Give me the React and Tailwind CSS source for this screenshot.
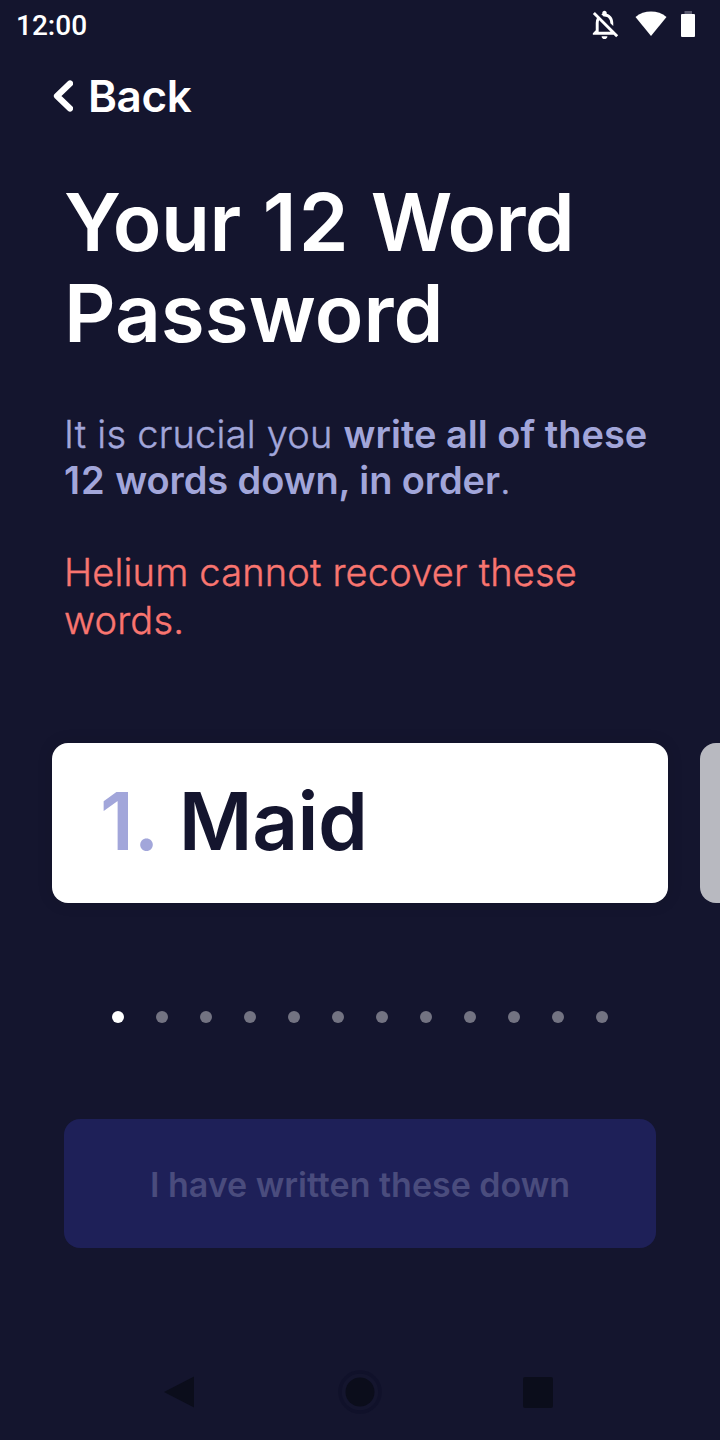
import { MdOutlineNotificationsOff } from "react-icons/md";

const DOTS = Array.from({ length: 12 }, (_, i) => i);

function StatusBar() {
  return (
    <div className="flex h-[50px] items-center pl-4 pr-[25px]">
      <span className="pt-px font-['Roboto',sans-serif] text-[28px] leading-[50px] font-medium text-white">12:00</span>
      <div className="ml-auto flex items-center pb-[2px]">
        <MdOutlineNotificationsOff className="size-[35px] text-white" />
        <svg className="ml-[13px] h-[26px] w-[32px]" viewBox="0 0 32 26">
          <path d="M0.5 6 C9 -1.2 23 -1.2 31.5 6 L16 25 Z" fill="#fff" />
        </svg>
        <svg className="ml-[14px] h-[27px] w-[14px]" viewBox="0 0 14 27">
          <rect x="3.5" y="0" width="7.5" height="4" fill="#5b5b70" />
          <rect x="0" y="3" width="14" height="23" rx="1" fill="#fff" />
        </svg>
      </div>
    </div>
  );
}

function NavBar() {
  return (
    <div className="mt-auto flex h-[96px] items-center justify-between pl-[161px] pr-[167px]">
      <svg className="h-9 w-9" viewBox="0 0 36 36">
        <path d="M3 18 L33 2.5 V33.5 Z" fill="#0b0d1b" />
      </svg>
      <svg className="-ml-[1px] h-11 w-11" viewBox="0 0 44 44">
        <circle cx="22" cy="22" r="20" fill="none" stroke="#10112a" strokeWidth="3.5" />
        <circle cx="22" cy="22" r="14.5" fill="#0b0d1b" />
      </svg>
      <svg className="h-[31px] w-[30px]" viewBox="0 0 30 31">
        <rect width="30" height="31" rx="2" fill="#0b0d1b" />
      </svg>
    </div>
  );
}

export default function App() {
  return (
    <div className="flex h-[1440px] w-[720px] flex-col overflow-hidden bg-[#14152e] font-['Inter',sans-serif]">
      <StatusBar />
      <button className="mt-[18px] flex h-14 items-center self-start pl-[53px] text-[44px] leading-[56px] font-semibold tracking-[-0.4px] text-white">
        <svg className="mr-[15px] h-8 w-5" viewBox="0 0 20 32" fill="none" stroke="#fff" strokeWidth="6.2" strokeLinecap="round" strokeLinejoin="round">
          <path d="M17 3.5 L4 16 L17 28.5" />
        </svg>
        Back
      </button>

      <h1 className="mt-[52px] ml-16 h-[182px] text-[80px] leading-[91px] font-semibold whitespace-nowrap text-white">
        <span className="mr-[2px] tracking-[-0.5px]">Your</span> <span className="tracking-[2px]">12</span>{" "}
        <span className="tracking-[-0.7px]">Word</span>
        <br />
        Password
      </h1>

      <p className="mt-[53px] ml-16 h-[92px] text-[38px] leading-[46px] font-light whitespace-nowrap text-[#a2a6da]">
        <span className="tracking-[0.22px] [-webkit-text-stroke:0.4px_#a2a6da]">It is crucial you </span>
        <span className="font-semibold">write all of these</span>
        <br />
        <span className="font-semibold">
          <span className="tracking-[1px]">12</span> <span className="tracking-[-0.1px]">words down, in order</span>
        </span>
        <span className="[-webkit-text-stroke:0.4px_#a2a6da]">.</span>
      </p>
      <p className="mt-[45px] ml-16 h-[96px] text-[38px] leading-[48px] font-light tracking-[0.18px] whitespace-nowrap text-[#f97570] [-webkit-text-stroke:0.4px_#f97570]">
        Helium cannot recover these
        <br />
        words.
      </p>

      <div className="mt-[99px] ml-[52px] flex h-[160px] gap-8">
        <div className="flex w-[616px] shrink-0 items-center rounded-[16px] bg-white pb-1 pl-12 text-[80px] leading-[96px] font-semibold whitespace-pre text-[#14152e] shadow-[0_0_16px_rgba(0,0,0,0.12)]">
          <span className="text-[#a2a6da]">1. </span>
          <span className="ml-px tracking-[-0.5px]">Maid</span>
        </div>
        <div className="w-[616px] shrink-0 rounded-[16px] bg-[#b8b9c0]" />
      </div>

      <div className="mt-[108px] flex h-3 justify-center gap-8">
        {DOTS.map((i) => (
          <span key={i} className={i === 0 ? "size-3 rounded-full bg-white" : "size-3 rounded-full bg-[#737382]"} />
        ))}
      </div>

      <button className="mx-16 mt-[96px] flex h-[129px] items-center justify-center rounded-[16px] bg-[#1e2058] pt-[2px] text-[34px] font-semibold whitespace-nowrap text-[#4a4c7d]">
        I have written these down
      </button>
      <NavBar />
    </div>
  );
}
